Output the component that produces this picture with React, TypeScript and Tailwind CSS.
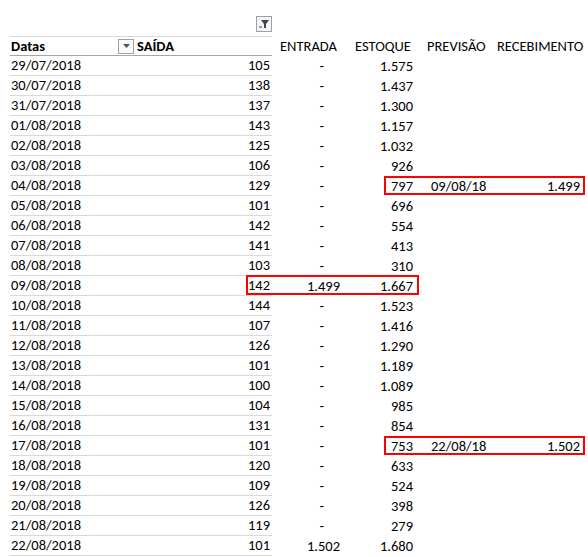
import React from "react";

const rows: [string, string, string, string, string?, string?][] = [
  ["29/07/2018","105","-","1.575"],["30/07/2018","138","-","1.437"],["31/07/2018","137","-","1.300"],
  ["01/08/2018","143","-","1.157"],["02/08/2018","125","-","1.032"],["03/08/2018","106","-","926"],
  ["04/08/2018","129","-","797","09/08/18","1.499"],["05/08/2018","101","-","696"],["06/08/2018","142","-","554"],
  ["07/08/2018","141","-","413"],["08/08/2018","103","-","310"],["09/08/2018","142","1.499","1.667"],
  ["10/08/2018","144","-","1.523"],["11/08/2018","107","-","1.416"],["12/08/2018","126","-","1.290"],
  ["13/08/2018","101","-","1.189"],["14/08/2018","100","-","1.089"],["15/08/2018","104","-","985"],
  ["16/08/2018","131","-","854"],["17/08/2018","101","-","753","22/08/18","1.502"],["18/08/2018","120","-","633"],
  ["19/08/2018","109","-","524"],["20/08/2018","126","-","398"],["21/08/2018","119","-","279"],
  ["22/08/2018","101","1.502","1.680"],
];

export default function App() {
  return (
    <div className="w-[588px] h-[557px] bg-white text-[14.5px] text-black leading-none" style={{ fontFamily: "Carlito, Calibri, 'Open Sans', sans-serif" }}>
      <div className="h-[35px] relative">
        <div className="absolute left-[256px] top-[16px] w-[16px] h-[16px] border border-gray-400 bg-gray-100 flex items-center justify-center">
          <svg width="11" height="10" viewBox="0 0 11 10"><path d="M2 1h8L7 5v4H5V5z" fill="#444"/><path d="M0 8h3" stroke="#444" strokeWidth="1"/></svg>
        </div>
      </div>
      <div className="flex h-[20px] items-center pt-[2px]">
        <div className="ml-[10px] w-[262px] h-[20px] border-t border-b border-[#d9d9d9] border-b-[#a6a6a6] flex items-center font-bold">
          <div className="w-[108px] pl-[1px]">Datas</div>
          <div className="w-[16px] h-[15px] border border-gray-400 bg-gray-50 flex items-center justify-center mr-[3px]">
            <svg width="7" height="4"><path d="M0 0h7L3.5 4z" fill="#555"/></svg>
          </div>
          <div>SAÍDA</div>
        </div>
        <div className="w-[75px] pl-[8px]">ENTRADA</div>
        <div className="w-[72px] pl-[8px]">ESTOQUE</div>
        <div className="w-[78px] pl-[8px]">PREVISÃO</div>
        <div>RECEBIMENTO</div>
      </div>
      {rows.map((r, i) => (
        <div key={i} className="flex h-[20px] items-center relative pt-[2px]">
          <div className="ml-[10px] w-[262px] h-[20px] border-b border-[#d9d9d9] flex items-center">
            <div className="w-[127px] pl-[1px]">{r[0]}</div>
            <div className="flex-1 text-right pr-[2px]">{r[1]}</div>
          </div>
          <div className="w-[70px] text-right pr-[2px]">{r[2] === "-" ? <span className="pr-[16px]">-</span> : r[2]}</div>
          <div className="w-[73px] text-right pr-[2px]">{r[3]}</div>
          <div className="w-[72px] pl-[16px]">{r[4] ?? ""}</div>
          <div className="w-[93px] text-right">{r[5] ?? ""}</div>
          {r[4] && <div className="absolute left-[384px] w-[201px] top-[1px] h-[19px] border-2 border-[#ff0000]" />}
          {r[2] === "1.499" && <div className="absolute left-[246px] w-[173px] top-[0px] h-[20px] border-2 border-[#ff0000]" />}
        </div>
      ))}
    </div>
  );
}
